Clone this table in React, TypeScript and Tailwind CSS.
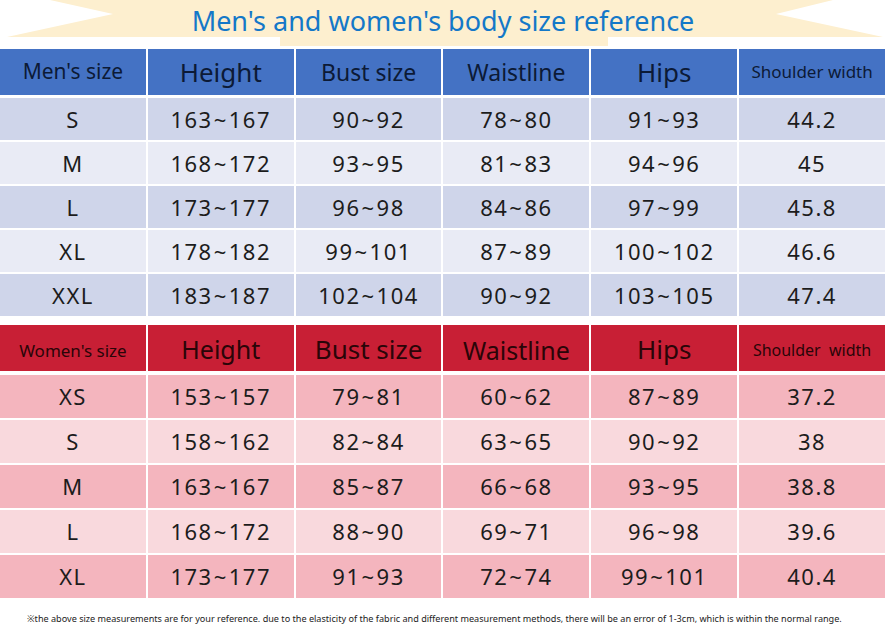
import React from "react";

const menHeaders: { t: string; cls: string }[] = [
  { t: "Men's size", cls: "text-[21px]" },
  { t: "Height", cls: "text-[26px]" },
  { t: "Bust size", cls: "text-[23px]" },
  { t: "Waistline", cls: "text-[23px]" },
  { t: "Hips", cls: "text-[26px]" },
  { t: "Shoulder width", cls: "text-[17px]" },
];

const womenHeaders: { t: string; cls: string }[] = [
  { t: "Women's size", cls: "text-[17px] pt-[6px]" },
  { t: "Height", cls: "text-[25px] pt-[4px]" },
  { t: "Bust size", cls: "text-[26px] pt-[2px]" },
  { t: "Waistline", cls: "text-[25px] pt-[6px]" },
  { t: "Hips", cls: "text-[26px] pt-[2px]" },
  { t: "Shoulder\u00a0 width", cls: "text-[16px] pt-[4px]" },
];

const menRows = [
  ["S", "163~167", "90~92", "78~80", "91~93", "44.2"],
  ["M", "168~172", "93~95", "81~83", "94~96", "45"],
  ["L", "173~177", "96~98", "84~86", "97~99", "45.8"],
  ["XL", "178~182", "99~101", "87~89", "100~102", "46.6"],
  ["XXL", "183~187", "102~104", "90~92", "103~105", "47.4"],
];

const womenRows = [
  ["XS", "153~157", "79~81", "60~62", "87~89", "37.2"],
  ["S", "158~162", "82~84", "63~65", "90~92", "38"],
  ["M", "163~167", "85~87", "66~68", "93~95", "38.8"],
  ["L", "168~172", "88~90", "69~71", "96~98", "39.6"],
  ["XL", "173~177", "91~93", "72~74", "99~101", "40.4"],
];

function Value({ v }: { v: string }) {
  const parts = v.split("~");
  if (parts.length === 1) return <span className="tracking-[1.5px]">{v}</span>;
  return (
    <span className="tracking-[1.5px]">
      {parts[0]}
      <span className="mx-[1px]">~</span>
      {parts[1]}
    </span>
  );
}

export default function App() {
  return (
    <div className="w-[886px] h-[636px] bg-white overflow-hidden font-['Noto_Sans','Open_Sans',sans-serif]">
      {/* Title band */}
      <div className="relative h-[49px]">
        <svg
          className="absolute inset-0"
          width="886"
          height="49"
          viewBox="0 0 886 49"
        >
          <polygon
            points="50,0 833,0 776,14 883,37 608,37 608,46 280,46 280,37 7,37 113,14"
            fill="#fdefcf"
          />
        </svg>
        <h1 className="relative text-center text-[27px] leading-none pt-[7px] text-[#1478c8] font-normal">
          Men's and women's body size reference
        </h1>
      </div>

      {/* Men's table */}
      <div className="grid grid-cols-6 gap-x-[2px] h-[46px] w-[885px]">
        {menHeaders.map((h) => (
          <div
            key={h.t}
            className={`bg-[#4472c4] flex items-center justify-center text-[#0c1a36] whitespace-nowrap ${h.cls}`}
          >
            {h.t}
          </div>
        ))}
      </div>
      <div className="flex flex-col gap-y-[2px] mt-[3px] w-[885px]">
        {menRows.map((r, i) => (
          <div key={i} className="grid grid-cols-6 gap-x-[2px] h-[42px]">
            {r.map((c, j) => (
              <div
                key={j}
                className={`${i % 2 === 0 ? "bg-[#cfd5ea]" : "bg-[#e9ebf5]"} flex items-center justify-center text-[22px] text-[#1c1c1c]`}
              >
                <Value v={c} />
              </div>
            ))}
          </div>
        ))}
      </div>

      {/* Women's table */}
      <div className="grid grid-cols-6 gap-x-[2px] h-[46px] mt-[9px] w-[885px]">
        {womenHeaders.map((h) => (
          <div
            key={h.t}
            className={`bg-[#c81f35] flex items-center justify-center text-[#2a0508] whitespace-nowrap ${h.cls}`}
          >
            {h.t}
          </div>
        ))}
      </div>
      <div className="flex flex-col gap-y-[2px] mt-[4px] w-[885px]">
        {womenRows.map((r, i) => (
          <div key={i} className="grid grid-cols-6 gap-x-[2px] h-[43px]">
            {r.map((c, j) => (
              <div
                key={j}
                className={`${i % 2 === 0 ? "bg-[#f4b5be]" : "bg-[#f9d9dd]"} flex items-center justify-center text-[22px] text-[#1c1c1c]`}
              >
                <Value v={c} />
              </div>
            ))}
          </div>
        ))}
      </div>

      <p className="pl-[27px] mt-[16px] text-[9.1px] leading-none text-[#222222] whitespace-nowrap">
        ※the above size measurements are for your reference. due to the elasticity of the fabric and different measurement methods, there will be an error of 1-3cm, which is within the normal range.
      </p>
    </div>
  );
}
